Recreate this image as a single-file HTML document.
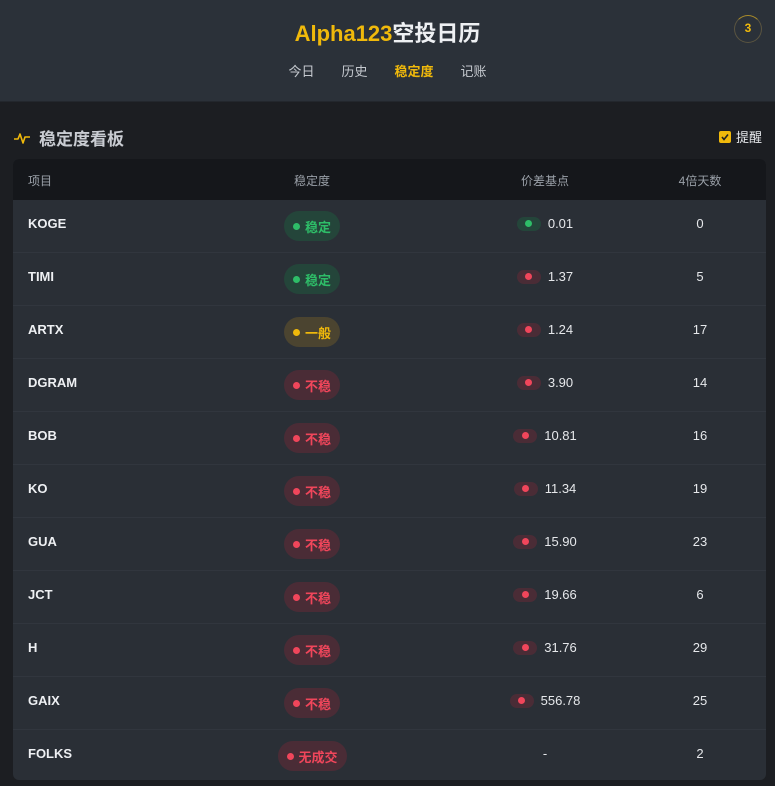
<!DOCTYPE html>
<html><head><meta charset="utf-8"><style>
*{margin:0;padding:0;box-sizing:border-box}
body{width:775px;height:786px;background:#1c1e22;font-family:"Liberation Sans","Noto Sans CJK SC",sans-serif;color:#e6e8eb;overflow:hidden;position:relative}
.hdr{height:102px;background:#2b3139;position:relative;border-bottom:1px solid #23272d}
.title{position:absolute;top:16px;width:100%;text-align:center;font-size:22px;font-weight:bold;color:#eef0f3}
.title span{color:#f0b90b}
.nav{position:absolute;top:61px;width:100%;text-align:center;font-size:13px;color:#c4c8ce}
.nav b{font-weight:normal;margin:0 13.5px}
.nav .a{color:#f0b90b;font-weight:bold}
.circ{position:absolute;left:734px;top:15px;width:28px;height:28px;border-radius:50%;border:1.5px solid #5a5440;border-top-color:#a88a2a;color:#f0b90b;font-size:12px;font-weight:bold;text-align:center;line-height:25px}
.h2{position:absolute;top:125px;left:13px;font-size:17px;font-weight:bold;color:#c9ccd2;display:flex;align-items:center;gap:6px}
.rem{position:absolute;top:127px;left:719px;font-size:13px;color:#e6e8eb;display:flex;align-items:center;gap:5px}
.cb{width:12px;height:12px;background:#f0b90b;border-radius:2px;position:relative}
.tbl{position:absolute;left:13px;top:159px;width:753px;height:621px;background:#2a2f36;border-radius:6px;overflow:hidden}
.th{height:41px;background:#15171b;font-size:12px;color:#9aa0a8;position:relative}
.row{height:53px;border-bottom:1px solid #31363e;position:relative;font-size:13px}
.c1{position:absolute;left:15px;top:16px;font-weight:bold;color:#eef0f3}
.th .c1{top:13px;font-weight:normal;color:#9aa0a8}
.c2{position:absolute;left:299px;width:0;top:11px;display:flex;justify-content:center}
.c3{position:absolute;left:532px;width:0;top:16px;display:flex;justify-content:center}
.c4{position:absolute;left:687px;width:0;top:16px;display:flex;justify-content:center}
.th .c2,.th .c3,.th .c4{top:13px}
.c2>*,.c3>*,.c4>*{white-space:nowrap;flex:none}
.bd{height:30px;border-radius:15px;padding:0 9px;font-weight:bold;font-size:13px;display:flex;align-items:center;gap:5px}
.bd i{width:7px;height:7px;border-radius:50%;display:block}
.g{background:#24453a;color:#2ebd68}.g i{background:#2ebd68}
.y{background:#4b4430;color:#f0b90b}.y i{background:#f0b90b}
.r{background:#4a2c36;color:#f0465b}.r i{background:#f0465b}
.pv{display:flex;align-items:center;gap:7px;color:#e6e8eb}
.pl{width:24px;height:14px;border-radius:7px;display:flex;align-items:center;justify-content:center}
.pl i{width:7px;height:7px;border-radius:50%;display:block}
.pg{background:#24453a}.pg i{background:#2ebd68}
.pr{background:#4a2c36}.pr i{background:#f0465b}
</style></head><body>
<div class="hdr">
<div class="title"><span>Alpha123</span>空投日历</div>
<div class="nav"><b>今日</b><b>历史</b><b class="a">稳定度</b><b>记账</b></div>
<div class="circ">3</div>
</div>
<div class="h2"><svg width="20" height="14" viewBox="0 0 20 14"><path d="M1 8h4l2-5 3 9 2-6h5" fill="none" stroke="#f0b90b" stroke-width="1.6" stroke-linejoin="round"/></svg>稳定度看板</div>
<div class="rem"><div class="cb"><svg width="12" height="12" viewBox="0 0 12 12"><path d="M3 6l2 2.5 4-5" fill="none" stroke="#222" stroke-width="1.6"/></svg></div>提醒</div>
<div class="tbl">
<div class="th"><div class="c1">项目</div><div class="c2"><span>稳定度</span></div><div class="c3"><span>价差基点</span></div><div class="c4"><span>4倍天数</span></div></div>
<div class="row"><div class="c1">KOGE</div><div class="c2"><div class="bd g"><i></i>稳定</div></div><div class="c3"><div class="pv"><div class="pl pg"><i></i></div>0.01</div></div><div class="c4"><span>0</span></div></div>
<div class="row"><div class="c1">TIMI</div><div class="c2"><div class="bd g"><i></i>稳定</div></div><div class="c3"><div class="pv"><div class="pl pr"><i></i></div>1.37</div></div><div class="c4"><span>5</span></div></div>
<div class="row"><div class="c1">ARTX</div><div class="c2"><div class="bd y"><i></i>一般</div></div><div class="c3"><div class="pv"><div class="pl pr"><i></i></div>1.24</div></div><div class="c4"><span>17</span></div></div>
<div class="row"><div class="c1">DGRAM</div><div class="c2"><div class="bd r"><i></i>不稳</div></div><div class="c3"><div class="pv"><div class="pl pr"><i></i></div>3.90</div></div><div class="c4"><span>14</span></div></div>
<div class="row"><div class="c1">BOB</div><div class="c2"><div class="bd r"><i></i>不稳</div></div><div class="c3"><div class="pv"><div class="pl pr"><i></i></div>10.81</div></div><div class="c4"><span>16</span></div></div>
<div class="row"><div class="c1">KO</div><div class="c2"><div class="bd r"><i></i>不稳</div></div><div class="c3"><div class="pv"><div class="pl pr"><i></i></div>11.34</div></div><div class="c4"><span>19</span></div></div>
<div class="row"><div class="c1">GUA</div><div class="c2"><div class="bd r"><i></i>不稳</div></div><div class="c3"><div class="pv"><div class="pl pr"><i></i></div>15.90</div></div><div class="c4"><span>23</span></div></div>
<div class="row"><div class="c1">JCT</div><div class="c2"><div class="bd r"><i></i>不稳</div></div><div class="c3"><div class="pv"><div class="pl pr"><i></i></div>19.66</div></div><div class="c4"><span>6</span></div></div>
<div class="row"><div class="c1">H</div><div class="c2"><div class="bd r"><i></i>不稳</div></div><div class="c3"><div class="pv"><div class="pl pr"><i></i></div>31.76</div></div><div class="c4"><span>29</span></div></div>
<div class="row"><div class="c1">GAIX</div><div class="c2"><div class="bd r"><i></i>不稳</div></div><div class="c3"><div class="pv"><div class="pl pr"><i></i></div>556.78</div></div><div class="c4"><span>25</span></div></div>
<div class="row" style="border:none"><div class="c1">FOLKS</div><div class="c2"><div class="bd r"><i></i>无成交</div></div><div class="c3"><span>-</span></div><div class="c4"><span>2</span></div></div>
</div>
</body></html>
